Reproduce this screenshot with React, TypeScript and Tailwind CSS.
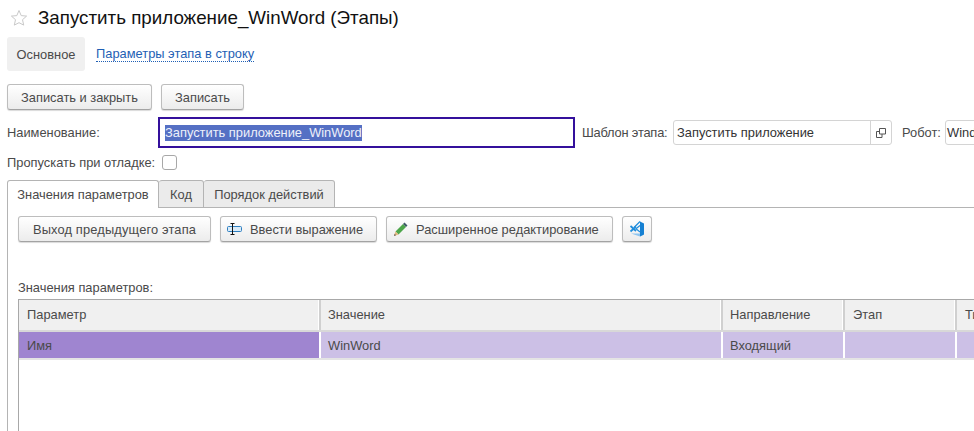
const Button = ({ children, className }: { children: React.ReactNode; className: string }) => {
  return (
    <button
      className={`flex items-center h-[26px] rounded-[3px] border border-[#bdbdbd] border-b-[#a3a3a3] bg-gradient-to-b from-white to-[#ececec] shadow-[0_1px_1px_rgba(0,0,0,0.15)] text-[#4a4a4a] ${className}`}
    >
      {children}
    </button>
  );
};

const Star = () => (
  <svg width="18" height="18" viewBox="0 0 18 18" className="ml-[10px] mt-px shrink-0">
    <path d="M9 1.5l2.2 5.1 5.4.5-4.1 3.6 1.2 5.4L9 13.7l-4.7 2.4 1.2-5.4L1.4 7.1l5.4-.5z" fill="none" stroke="#c9c9c9" strokeWidth="1" />
  </svg>
);

const OpenIcon = () => (
  <svg width="12" height="12" viewBox="0 0 12 12">
    <path d="M4.5 1.5h6v5.500h-6zM4.500 4.500h-3v6h5.500v-3.500" fill="none" stroke="#555" strokeWidth="1" />
  </svg>
);

const ExpressionIcon = () => (
  <svg width="15" height="12" viewBox="0 0 15 12" className="mr-[8px]">
    <rect x="0.500" y="3.500" width="14" height="5" rx="1" fill="#d9ebf8" stroke="#2f7fc0" />
    <path d="M5.500 1v10M3.500 .5h4M3.500 11.500h4" stroke="#111" strokeWidth="1" />
  </svg>
);

const PencilIcon = () => (
  <svg width="15" height="15" viewBox="0 0 15 15" className="mr-[8px]">
    <path d="M2.500 9.500L10 2l3 3-7.500 7.500z" fill="#4da64a" />
    <path d="M10 2l1.500-1.500 3 3L13 5z" fill="#3d5a66" />
    <path d="M2.500 9.500l3 3L1 14z" fill="#e6b980" />
    <path d="M1.700 11.800l1.300 1.400-2 .800z" fill="#555" />
  </svg>
);

const VsCodeIcon = () => (
  <svg width="16" height="16" viewBox="0 0 16 16">
    <path d="M2 12.500l9 3 4-2-4-1z" fill="#8cc4f0" />
    <path d="M11 .5l4 2v11l-4 2z" fill="#1580d2" />
    <path d="M11 .5L5 6.500M11 4.500L7 7.800 11 11" fill="none" stroke="#1f8ddc" strokeWidth="1.200" />
    <path d="M1.500 5l5.500 5M1.500 10.500L7 5.500" fill="none" stroke="#1f8ddc" strokeWidth="1.700" />
  </svg>
);

const columns = [
  { title: "Параметр", value: "Имя", width: "w-[302px] pl-[8px]", rowBg: "bg-[#9f85d0]" },
  { title: "Значение", value: "WinWord", width: "w-[402px] pl-[7px]", rowBg: "bg-[#ccc0e6]" },
  { title: "Направление", value: "Входящий", width: "w-[122px] pl-[7px]", rowBg: "bg-[#ccc0e6]" },
  { title: "Этап", value: "", width: "w-[112px] pl-[8px]", rowBg: "bg-[#ccc0e6]" },
  { title: "Тип", value: "", width: "w-[60px] pl-[8px]", rowBg: "bg-[#ccc0e6]" },
];

const App = () => {
  return (
    <div className="w-[974px] h-[431px] overflow-hidden bg-white text-[12.87px] leading-[15px] text-[#4a4a4a] font-['Liberation_Sans',Arial,sans-serif]">
      <div className="flex items-center h-[37px] pb-[2px]">
        <Star />
        <h1 className="ml-[10px] text-[18.77px] leading-[22px] text-[#111] whitespace-nowrap">Запустить приложение_WinWord (Этапы)</h1>
      </div>

      <div className="flex items-center h-[34px] pl-[7px]">
        <div className="flex items-center justify-center w-[78px] h-[34px] rounded-[3px] bg-[#f0f0f0]">Основное</div>
        <a className="ml-[11px] text-[#1f5fb4] border-b border-dotted border-[#1f5fb4] leading-[14px]">Параметры этапа в строку</a>
      </div>

      <div className="flex gap-[9px] pl-[7px] mt-[13px]">
        <Button className="justify-center w-[145px]">Записать и закрыть</Button>
        <Button className="justify-center w-[83px]">Записать</Button>
      </div>

      <div className="flex items-center h-[31px] mt-[7px] pl-[7px] whitespace-nowrap">
        <span className="w-[151px] shrink-0">Наименование:</span>
        <div className="flex items-center w-[417px] h-[31px] shrink-0 border-[2px] border-[#34109c] pl-[5px]">
          <span className="bg-[#5570c4] text-[#eef1fa] leading-[16px]">Запустить приложение_WinWord</span>
        </div>
        <span className="ml-[7px] w-[91px] shrink-0 tracking-[-0.2px]">Шаблон этапа:</span>
        <div className="flex items-center w-[219px] h-[25px] shrink-0 rounded-[3px] border border-[#d4d4d4] text-[#333]">
          <span className="flex-1 pl-[3px]">Запустить приложение</span>
          <div className="flex items-center justify-center w-[21px] h-full border-l border-[#d4d4d4]">
            <OpenIcon />
          </div>
        </div>
        <span className="ml-[10px] w-[43px] shrink-0">Робот:</span>
        <div className="flex items-center w-[60px] h-[25px] shrink-0 rounded-l-[3px] border border-[#d4d4d4] pl-[1px] text-[#333]">Windows</div>
      </div>

      <div className="flex items-center h-[16px] mt-[6px] pl-[7px]">
        <span className="w-[155px]">Пропускать при отладке:</span>
        <div className="w-[15px] h-[15px] rounded-[3px] border border-[#a8a8a8] bg-white"></div>
      </div>

      <div className="flex items-end h-[28px] mt-[10px] pl-[7px]">
        <div className="flex items-center justify-center w-[152px] h-[28px] rounded-t-[3px] border border-b-0 border-[#b4b4b4] bg-white">Значения параметров</div>
        <div className="flex items-center justify-center w-[45px] h-[28px] rounded-t-[3px] border border-l-0 border-[#b4b4b4] bg-[#ebebeb]">Код</div>
        <div className="flex items-center justify-center w-[131px] h-[28px] rounded-t-[3px] border border-l-0 border-[#b4b4b4] bg-[#ebebeb]">Порядок действий</div>
        <div className="flex-1 border-b border-[#b4b4b4]"></div>
      </div>

      <div className="ml-[7px] h-[223px] border-l border-[#b4b4b4] pl-[10px] pt-[8px]">
        <div className="flex gap-[9px]">
          <Button className="justify-center w-[193px] tracking-[0.15px]">Выход предыдущего этапа</Button>
          <Button className="w-[157px] pl-[6px]"><ExpressionIcon />Ввести выражение</Button>
          <Button className="w-[227px] pl-[6px]"><PencilIcon />Расширенное редактирование</Button>
          <Button className="justify-center w-[30px]"><VsCodeIcon /></Button>
        </div>

        <div className="mt-[38px] h-[19px]">Значения параметров:</div>

        <div className="border-l border-t border-[#a8a8a8] h-[140px]">
          <div className="flex h-[32px] border-b-[2px] border-[#d8d8d8]">
            {columns.map((col) => (
              <div key={col.title} className={`flex items-center shrink-0 pb-px bg-[#f0f0f0] border-r-[2px] border-[#d0d0d0] shadow-[inset_-1px_0_0_#ffffff] ${col.width}`}>
                {col.title}
              </div>
            ))}
          </div>
          <div className="flex h-[28px] border-b-[2px] border-[#e4e4e4]">
            {columns.map((col) => (
              <div key={col.title} className={`flex items-center shrink-0 border-r-[2px] border-white ${col.rowBg} ${col.width}`}>
                {col.value}
              </div>
            ))}
          </div>
        </div>
      </div>
    </div>
  );
};

export default App;
